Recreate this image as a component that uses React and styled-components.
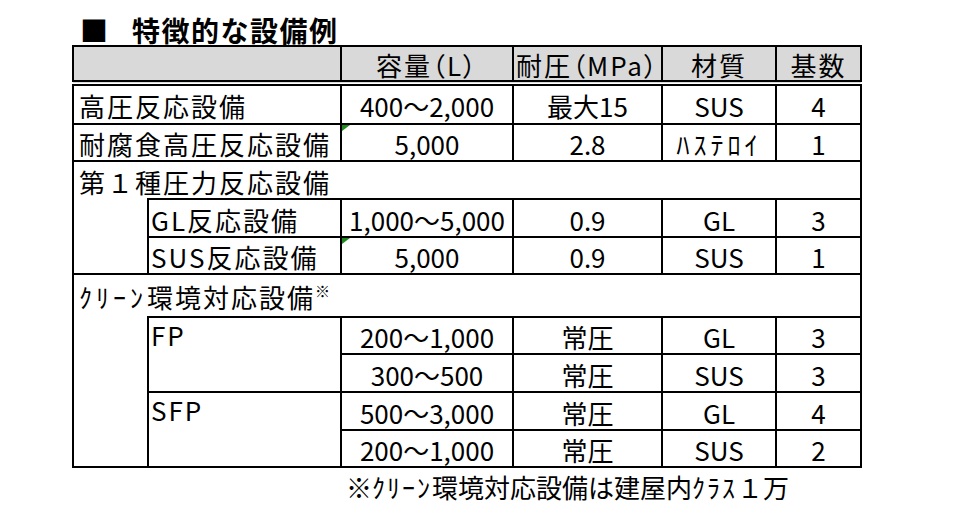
import React from "react";
import styled, { createGlobalStyle } from "styled-components";

const Global = createGlobalStyle`
  html, body { margin: 0; padding: 0; background: #fff; }
  body {
    font-family: "Noto Sans CJK JP", "Noto Sans", sans-serif;
    color: #000;
  }
`;

const Page = styled.div`
  padding: 15px 0 0 72px;
`;

const Title = styled.h2`
  display: flex;
  align-items: center;
  gap: 24px;
  margin: 0 0 0 8px;
  font-size: 28px;
  font-weight: 700;
  line-height: 30px;
  letter-spacing: 1.5px;
`;

const Bullet = styled.span`
  letter-spacing: 0;
`;

const Sheet = styled.table`
  border-collapse: collapse;
  table-layout: fixed;
  font-size: 26px;
  line-height: 1;
`;

const Row = styled.tr`
  height: ${(p) => p.$h || 37}px;
`;

const line = "2px solid #000";

const HeadCell = styled.th`
  border: ${line};
  border-bottom: 6px double #000;
  background: #d9d9d9;
  font-weight: 400;
  text-align: center;
  letter-spacing: 2px;
  font-feature-settings: "palt";
  padding: 3px 0 0;
  white-space: nowrap;
`;

const LabelCell = styled.td`
  border: ${line};
  text-align: left;
  vertical-align: ${(p) => (p.$top ? "top" : "middle")};
  padding: ${(p) => (p.$top ? "4px" : "3px")} 0 0 ${(p) => (p.$nested ? 2 : 5)}px;
  letter-spacing: 2px;
  white-space: nowrap;
`;

const SectionCell = styled(LabelCell)`
  border-bottom: none;
`;

const SpacerCell = styled.td`
  border-left: ${line};
  border-right: ${line};
  border-bottom: ${line};
  border-top: none;
`;

const DataCell = styled.td`
  border: ${line};
  text-align: center;
  vertical-align: middle;
  padding: 3px 0 0;
  white-space: nowrap;
  position: relative;
  &::before {
    content: "";
    display: ${(p) => (p.$flag ? "block" : "none")};
    position: absolute;
    top: 0;
    left: 0;
    width: 0;
    height: 0;
    border-top: 6px solid #1e8a1e;
    border-right: 8px solid transparent;
  }
`;

const Kana = styled.span`
  letter-spacing: ${(p) => p.$sp ?? 4}px;
`;

const Mark = styled.sup`
  font-size: 15px;
  line-height: 0;
  vertical-align: 11px;
  letter-spacing: 0;
`;

const FootCell = styled.td`
  border: none;
  text-align: left;
  vertical-align: middle;
  padding: 0 0 0 5px;
  font-size: 26px;
  letter-spacing: 0;
  white-space: nowrap;
`;

const widths = [75, 193, 172, 149, 114, 85];

const simple = [
  { label: "高圧反応設備", cap: "400～2,000", p: "最大15", mat: "SUS", n: "4", h: 41 },
  { label: "耐腐食高圧反応設備", cap: "5,000", p: "2.8", mat: <Kana>ﾊｽﾃﾛｲ</Kana>, n: "1", flag: true },
];

export default function App() {
  return (
    <>
      <Global />
      <Page>
        <Title>
          <Bullet>■</Bullet>
          <span>特徴的な設備例</span>
        </Title>
        <Sheet>
          <colgroup>
            {widths.map((w, i) => (
              <col key={i} style={{ width: w }} />
            ))}
          </colgroup>
          <thead>
            <Row $h={37}>
              <HeadCell colSpan={2} />
              <HeadCell>容量（L）</HeadCell>
              <HeadCell>耐圧（MPa）</HeadCell>
              <HeadCell>材質</HeadCell>
              <HeadCell>基数</HeadCell>
            </Row>
          </thead>
          <tbody>
            {simple.map((r) => (
              <Row key={r.label} $h={r.h}>
                <LabelCell colSpan={2}>{r.label}</LabelCell>
                <DataCell $flag={r.flag}>{r.cap}</DataCell>
                <DataCell>{r.p}</DataCell>
                <DataCell>{r.mat}</DataCell>
                <DataCell>{r.n}</DataCell>
              </Row>
            ))}
            <Row $h={38}>
              <SectionCell colSpan={6}>第１種圧力反応設備</SectionCell>
            </Row>
            <Row $h={38}>
              <SpacerCell rowSpan={2} />
              <LabelCell $nested>GL反応設備</LabelCell>
              <DataCell>1,000～5,000</DataCell>
              <DataCell>0.9</DataCell>
              <DataCell>GL</DataCell>
              <DataCell>3</DataCell>
            </Row>
            <Row>
              <LabelCell $nested>SUS反応設備</LabelCell>
              <DataCell $flag>5,000</DataCell>
              <DataCell>0.9</DataCell>
              <DataCell>SUS</DataCell>
              <DataCell>1</DataCell>
            </Row>
            <Row $h={43}>
              <SectionCell colSpan={6}>
                <Kana>ｸﾘｰﾝ</Kana>環境対応設備<Mark>※</Mark>
              </SectionCell>
            </Row>
            <Row>
              <SpacerCell rowSpan={4} />
              <LabelCell $nested $top rowSpan={2}>FP</LabelCell>
              <DataCell>200～1,000</DataCell>
              <DataCell>常圧</DataCell>
              <DataCell>GL</DataCell>
              <DataCell>3</DataCell>
            </Row>
            <Row $h={38}>
              <DataCell>300～500</DataCell>
              <DataCell>常圧</DataCell>
              <DataCell>SUS</DataCell>
              <DataCell>3</DataCell>
            </Row>
            <Row $h={38}>
              <LabelCell $nested $top rowSpan={2}>SFP</LabelCell>
              <DataCell>500～3,000</DataCell>
              <DataCell>常圧</DataCell>
              <DataCell>GL</DataCell>
              <DataCell>4</DataCell>
            </Row>
            <Row>
              <DataCell>200～1,000</DataCell>
              <DataCell>常圧</DataCell>
              <DataCell>SUS</DataCell>
              <DataCell>2</DataCell>
            </Row>
          </tbody>
          <tfoot>
            <Row $h={38}>
              <FootCell colSpan={2} />
              <FootCell colSpan={4}>
                ※<Kana $sp={2}>ｸﾘｰﾝ</Kana>環境対応設備は建屋内<Kana $sp={2}>ｸﾗｽ</Kana>１万
              </FootCell>
            </Row>
          </tfoot>
        </Sheet>
      </Page>
    </>
  );
}
